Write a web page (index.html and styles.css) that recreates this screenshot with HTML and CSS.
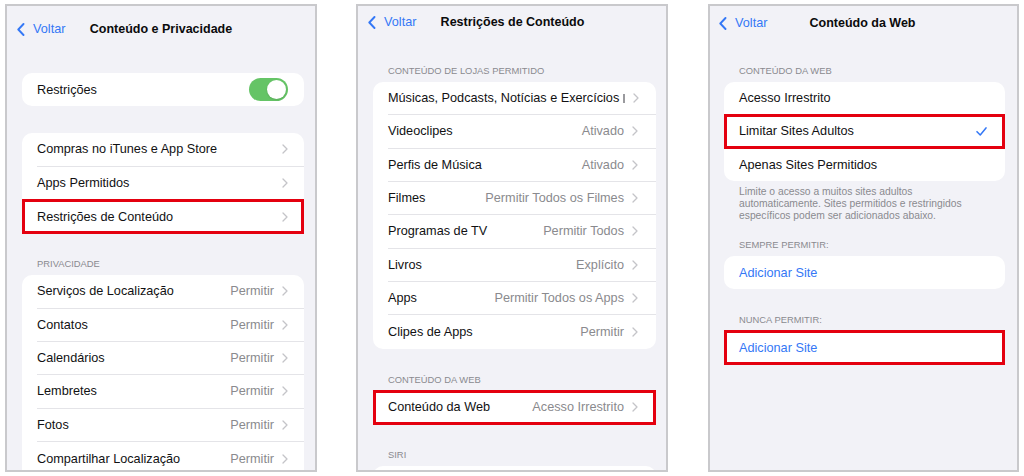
FILE: index.html
```html
<!DOCTYPE html>
<html lang="pt-BR">
<head>
<meta charset="utf-8">
<title>Conteúdo e Privacidade</title>
<link rel="stylesheet" href="styles.css">
</head>
<body>
<div class="stage">

  <!-- Panel 1 -->
  <section class="phone p1">
    <header class="nav">
      <a class="back"><svg class="back-chev" viewBox="0 0 8 13"><path d="M6.5 1L1.3 6.5l5.2 5.5"/></svg>Voltar</a>
      <h1 class="title">Conteúdo e Privacidade</h1>
      <span></span>
    </header>

    <div class="card first-card">
      <div class="row"><div class="row-body"><span class="label">Restrições</span><span class="toggle"><span class="knob"></span></span></div></div>
    </div>

    <div class="card gap-card">
      <div class="row"><div class="row-body"><span class="label">Compras no iTunes e App Store</span><svg class="chev" viewBox="0 0 6 10"><path d="M1 1l4 4-4 4"/></svg></div></div>
      <div class="row"><div class="row-body"><span class="label">Apps Permitidos</span><svg class="chev" viewBox="0 0 6 10"><path d="M1 1l4 4-4 4"/></svg></div></div>
      <div class="row hl"><div class="row-body"><span class="label">Restrições de Conteúdo</span><svg class="chev" viewBox="0 0 6 10"><path d="M1 1l4 4-4 4"/></svg></div></div>
    </div>

    <div class="section-head">Privacidade</div>
    <div class="card tail-card">
      <div class="row"><div class="row-body"><span class="label">Serviços de Localização</span><span class="value">Permitir</span><svg class="chev" viewBox="0 0 6 10"><path d="M1 1l4 4-4 4"/></svg></div></div>
      <div class="row"><div class="row-body"><span class="label">Contatos</span><span class="value">Permitir</span><svg class="chev" viewBox="0 0 6 10"><path d="M1 1l4 4-4 4"/></svg></div></div>
      <div class="row"><div class="row-body"><span class="label">Calendários</span><span class="value">Permitir</span><svg class="chev" viewBox="0 0 6 10"><path d="M1 1l4 4-4 4"/></svg></div></div>
      <div class="row"><div class="row-body"><span class="label">Lembretes</span><span class="value">Permitir</span><svg class="chev" viewBox="0 0 6 10"><path d="M1 1l4 4-4 4"/></svg></div></div>
      <div class="row"><div class="row-body"><span class="label">Fotos</span><span class="value">Permitir</span><svg class="chev" viewBox="0 0 6 10"><path d="M1 1l4 4-4 4"/></svg></div></div>
      <div class="row"><div class="row-body"><span class="label">Compartilhar Localização</span><span class="value">Permitir</span><svg class="chev" viewBox="0 0 6 10"><path d="M1 1l4 4-4 4"/></svg></div></div>
    </div>
  </section>

  <!-- Panel 2 -->
  <section class="phone p2">
    <header class="nav">
      <a class="back"><svg class="back-chev" viewBox="0 0 8 13"><path d="M6.5 1L1.3 6.5l5.2 5.5"/></svg>Voltar</a>
      <h1 class="title">Restrições de Conteúdo</h1>
      <span></span>
    </header>

    <div class="section-head tight">Conteúdo de lojas permitido</div>
    <div class="card">
      <div class="row"><div class="row-body"><span class="label">Músicas, Podcasts, Notícias e Exercícios</span><span class="value-bar"></span><svg class="chev" viewBox="0 0 6 10"><path d="M1 1l4 4-4 4"/></svg></div></div>
      <div class="row"><div class="row-body"><span class="label">Videoclipes</span><span class="value">Ativado</span><svg class="chev" viewBox="0 0 6 10"><path d="M1 1l4 4-4 4"/></svg></div></div>
      <div class="row"><div class="row-body"><span class="label">Perfis de Música</span><span class="value">Ativado</span><svg class="chev" viewBox="0 0 6 10"><path d="M1 1l4 4-4 4"/></svg></div></div>
      <div class="row"><div class="row-body"><span class="label">Filmes</span><span class="value">Permitir Todos os Filmes</span><svg class="chev" viewBox="0 0 6 10"><path d="M1 1l4 4-4 4"/></svg></div></div>
      <div class="row"><div class="row-body"><span class="label">Programas de TV</span><span class="value">Permitir Todos</span><svg class="chev" viewBox="0 0 6 10"><path d="M1 1l4 4-4 4"/></svg></div></div>
      <div class="row"><div class="row-body"><span class="label">Livros</span><span class="value">Explícito</span><svg class="chev" viewBox="0 0 6 10"><path d="M1 1l4 4-4 4"/></svg></div></div>
      <div class="row"><div class="row-body"><span class="label">Apps</span><span class="value">Permitir Todos os Apps</span><svg class="chev" viewBox="0 0 6 10"><path d="M1 1l4 4-4 4"/></svg></div></div>
      <div class="row"><div class="row-body"><span class="label">Clipes de Apps</span><span class="value">Permitir</span><svg class="chev" viewBox="0 0 6 10"><path d="M1 1l4 4-4 4"/></svg></div></div>
    </div>

    <div class="section-head">Conteúdo da Web</div>
    <div class="card">
      <div class="row hl"><div class="row-body"><span class="label">Conteúdo da Web</span><span class="value">Acesso Irrestrito</span><svg class="chev" viewBox="0 0 6 10"><path d="M1 1l4 4-4 4"/></svg></div></div>
    </div>

    <div class="section-head">Siri</div>
    <div class="card tail-card stub"></div>
  </section>

  <!-- Panel 3 -->
  <section class="phone p3">
    <header class="nav">
      <a class="back"><svg class="back-chev" viewBox="0 0 8 13"><path d="M6.5 1L1.3 6.5l5.2 5.5"/></svg>Voltar</a>
      <h1 class="title">Conteúdo da Web</h1>
      <span></span>
    </header>

    <div class="section-head tight">Conteúdo da Web</div>
    <div class="card">
      <div class="row"><div class="row-body"><span class="label">Acesso Irrestrito</span></div></div>
      <div class="row hl"><div class="row-body"><span class="label">Limitar Sites Adultos</span><svg class="check" viewBox="0 0 12 10"><path d="M1 5.2l3.6 3.6L11 1"/></svg></div></div>
      <div class="row"><div class="row-body"><span class="label">Apenas Sites Permitidos</span></div></div>
    </div>
    <p class="section-foot">Limite o acesso a muitos sites adultos automaticamente. Sites permitidos e restringidos específicos podem ser adicionados abaixo.</p>

    <div class="section-head short">Sempre permitir:</div>
    <div class="card">
      <div class="row"><div class="row-body"><span class="label link">Adicionar Site</span></div></div>
    </div>

    <div class="section-head">Nunca permitir:</div>
    <div class="card">
      <div class="row hl"><div class="row-body"><span class="label link">Adicionar Site</span></div></div>
    </div>
  </section>

</div>
</body>
</html>
```

FILE: styles.css
```css
* { box-sizing: border-box; }

html, body {
  margin: 0;
  padding: 0;
  background: #ffffff;
}

body {
  font-family: "Liberation Sans", Arial, sans-serif;
  color: #111113;
  -webkit-font-smoothing: antialiased;
}

.stage {
  display: flex;
  align-items: flex-start;
  gap: 39px;
  padding: 4px 0 0 5px;
}

.phone {
  width: 312px;
  height: 468px;
  background: #f2f2f7;
  border: 2px solid #c9c9cc;
  overflow: hidden;
  padding: 0 11px 0 15px;
}

.p1 { padding-top: 7px; }
.p2 { padding-right: 10px; }
.p3 { width: 311px; margin-left: 1px; padding-left: 14px; padding-right: 12px; padding-top: 1px; }

/* Navigation bar */
.nav {
  height: 32px;
  display: grid;
  grid-template-columns: 1fr auto 1fr;
  align-items: center;
  margin: 0 -11px 0 -15px;
  padding: 0 10px;
}

.p3 .nav { margin-bottom: -1px; }

.back {
  display: flex;
  align-items: center;
  gap: 8px;
  color: #3478f6;
  font-size: 12.7px;
  white-space: nowrap;
}

.back-chev {
  width: 8px;
  height: 13px;
  fill: none;
  stroke: #3478f6;
  stroke-width: 1.9;
  stroke-linecap: round;
  stroke-linejoin: round;
}

.title {
  margin: 0;
  font-size: 12.5px;
  font-weight: bold;
  color: #0b0b0c;
  white-space: nowrap;
  text-align: center;
}

/* Cards / groups */
.card {
  background: #ffffff;
  border-radius: 10px;
}

.tail-card {
  border-bottom-left-radius: 0;
  border-bottom-right-radius: 0;
}

.stub { height: 30px; }

.first-card { margin-top: 28px; }
.gap-card { margin-top: 27px; }

.row {
  position: relative;
  padding-left: 15px;
}

.row-body {
  height: 33.33px;
  display: flex;
  align-items: center;
  gap: 8px;
  padding-right: 16px;
  border-bottom: 1px solid #e4e4e8;
}

.p2 .row-body { padding-right: 18px; }
.p3 .row-body { height: 33px; }

.row:last-child .row-body { border-bottom: none; }

.label {
  flex: 1;
  font-size: 12.7px;
  white-space: nowrap;
  color: #111113;
}

.label.link { color: #3478f6; }

.value {
  font-size: 12.7px;
  color: #8a8a8e;
  white-space: nowrap;
}

.value-bar {
  width: 1.4px;
  height: 9px;
  flex: none;
  margin-left: -4px;
  background: #9a9a9e;
}

.chev {
  width: 6px;
  height: 10px;
  flex: none;
  fill: none;
  stroke: #c4c4c8;
  stroke-width: 1.3;
  stroke-linecap: round;
  stroke-linejoin: round;
}

.check {
  width: 11px;
  height: 9px;
  flex: none;
  margin-right: 2px;
  fill: none;
  stroke: #3478f6;
  stroke-width: 1.7;
  stroke-linecap: round;
  stroke-linejoin: round;
}

/* Highlighted row (red annotation box) */
.row.hl { background: #ffffff; }
.row.hl::after {
  content: "";
  position: absolute;
  inset: -1px 0;
  border: 3px solid #e4000f;
}

/* Toggle */
.toggle {
  width: 39px;
  height: 23px;
  border-radius: 12px;
  background: #65c466;
  display: flex;
  align-items: center;
  justify-content: flex-end;
  padding: 2px;
}

.knob {
  width: 19px;
  height: 19px;
  border-radius: 50%;
  background: #ffffff;
  box-shadow: 0 1px 2px rgba(0,0,0,0.12);
}

/* Section headers & footers */
.section-head {
  height: 42px;
  display: flex;
  align-items: flex-end;
  padding: 0 0 5px 15px;
  font-size: 9.4px;
  line-height: 12px;
  text-transform: uppercase;
  color: #8a8a8f;
  white-space: nowrap;
}

.section-head.tight { height: 44px; }
.section-head.short { height: 34px; }

.section-foot {
  margin: 0;
  padding: 5px 10px 0 15px;
  font-size: 10.3px;
  line-height: 12px;
  color: #8a8a8f;
}
```
